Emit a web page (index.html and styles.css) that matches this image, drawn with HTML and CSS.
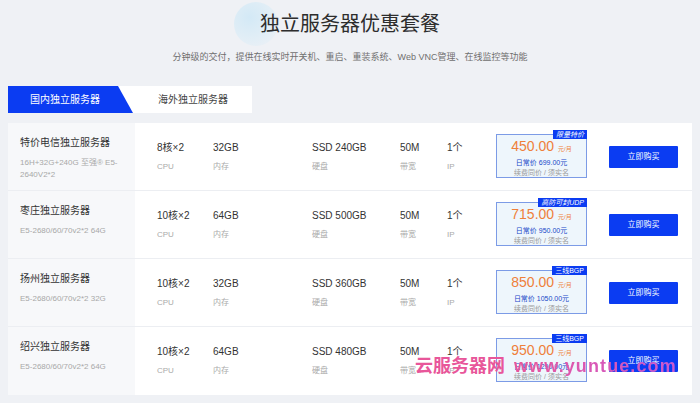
FILE: index.html
```html
<!DOCTYPE html>
<html lang="zh-CN">
<head>
  <meta charset="UTF-8">
  <meta name="viewport" content="width=device-width, initial-scale=1.0">
  <title>独立服务器优惠套餐</title>
  <link rel="stylesheet" href="styles.css">
</head>
<body>
  <div class="page">
    <!-- Heading -->
    <div class="hero">
      <span class="hero-dot"></span>
      <h1>独立服务器优惠套餐</h1>
      <p class="sub">分钟级的交付，提供在线实时开关机、重启、重装系统、Web VNC管理、在线监控等功能</p>
    </div>

    <!-- Tabs -->
    <div class="tabs">
      <div class="tab active">国内独立服务器</div>
      <div class="tab">海外独立服务器</div>
    </div>

    <!-- Server list -->
    <div class="list">
      <div class="row">
        <div class="name">
          <div class="title">特价电信独立服务器</div>
          <div class="desc">16H+32G+240G 至强® E5-<br>2640V2*2</div>
        </div>
        <div class="spec first"><div class="val">8核×2</div><div class="lbl">CPU</div></div>
        <div class="spec"><div class="val">32GB</div><div class="lbl">内存</div></div>
        <div class="spec"><div class="val">SSD 240GB</div><div class="lbl">硬盘</div></div>
        <div class="spec"><div class="val">50M</div><div class="lbl">带宽</div></div>
        <div class="spec"><div class="val">1个</div><div class="lbl">IP</div></div>
        <div class="price">
          <span class="badge">限量特价</span>
          <div class="amount">450.00 <small>元/月</small></div>
          <div class="normal">日常价 699.00元</div>
          <div class="note">续费同价 / 须实名</div>
        </div>
        <div class="buy"><a class="btn" href="#">立即购买</a></div>
      </div>

      <div class="row">
        <div class="name">
          <div class="title">枣庄独立服务器</div>
          <div class="desc">E5-2680/60/70v2*2 64G</div>
        </div>
        <div class="spec first"><div class="val">10核×2</div><div class="lbl">CPU</div></div>
        <div class="spec"><div class="val">64GB</div><div class="lbl">内存</div></div>
        <div class="spec"><div class="val">SSD 500GB</div><div class="lbl">硬盘</div></div>
        <div class="spec"><div class="val">50M</div><div class="lbl">带宽</div></div>
        <div class="spec"><div class="val">1个</div><div class="lbl">IP</div></div>
        <div class="price">
          <span class="badge">高防可封UDP</span>
          <div class="amount">715.00 <small>元/月</small></div>
          <div class="normal">日常价 950.00元</div>
          <div class="note">续费同价 / 须实名</div>
        </div>
        <div class="buy"><a class="btn" href="#">立即购买</a></div>
      </div>

      <div class="row">
        <div class="name">
          <div class="title">扬州独立服务器</div>
          <div class="desc">E5-2680/60/70v2*2 32G</div>
        </div>
        <div class="spec first"><div class="val">10核×2</div><div class="lbl">CPU</div></div>
        <div class="spec"><div class="val">32GB</div><div class="lbl">内存</div></div>
        <div class="spec"><div class="val">SSD 360GB</div><div class="lbl">硬盘</div></div>
        <div class="spec"><div class="val">50M</div><div class="lbl">带宽</div></div>
        <div class="spec"><div class="val">1个</div><div class="lbl">IP</div></div>
        <div class="price">
          <span class="badge plain">三线BGP</span>
          <div class="amount">850.00 <small>元/月</small></div>
          <div class="normal">日常价 1050.00元</div>
          <div class="note">续费同价 / 须实名</div>
        </div>
        <div class="buy"><a class="btn" href="#">立即购买</a></div>
      </div>

      <div class="row">
        <div class="name">
          <div class="title">绍兴独立服务器</div>
          <div class="desc">E5-2680/60/70v2*2 64G</div>
        </div>
        <div class="spec first"><div class="val">10核×2</div><div class="lbl">CPU</div></div>
        <div class="spec"><div class="val">64GB</div><div class="lbl">内存</div></div>
        <div class="spec"><div class="val">SSD 480GB</div><div class="lbl">硬盘</div></div>
        <div class="spec"><div class="val">50M</div><div class="lbl">带宽</div></div>
        <div class="spec"><div class="val">1个</div><div class="lbl">IP</div></div>
        <div class="price">
          <span class="badge plain">三线BGP</span>
          <div class="amount">950.00 <small>元/月</small></div>
          <div class="normal">日常价 1290.00元</div>
          <div class="note">续费同价 / 须实名</div>
        </div>
        <div class="buy"><a class="btn" href="#">立即购买</a></div>
      </div>
    </div>
  </div>

  <!-- Watermark -->
  <div class="watermark"><span class="wm-cn">云服务器网</span><span class="wm-url">www.yuntue.com</span></div>
</body>
</html>
```

FILE: styles.css
```css
body {
  margin: 0;
  background: #eff1f5;
  font-family: "Liberation Sans", "Noto Sans CJK SC", sans-serif;
  color: #333;
  position: relative;
  height: 403px;
  overflow: hidden;
}
.page {
  padding: 0 8px;
}

/* heading */
.hero {
  position: relative;
  text-align: center;
  padding-top: 10px;
}
.hero-dot {
  position: absolute;
  left: 226px;
  top: 2px;
  width: 44px;
  height: 44px;
  border-radius: 50%;
  background: radial-gradient(circle at 35% 35%, #d3e9f6 0%, #e2eef6 55%, rgba(232, 238, 245, 0) 100%);
}
.hero h1 {
  position: relative;
  margin: 0;
  font-size: 20px;
  line-height: 28px;
  font-weight: normal;
  color: #2d2d2d;
}
.hero .sub {
  position: relative;
  margin: 12px 0 0;
  font-size: 9px;
  line-height: 14px;
  color: #6f6f6f;
}

/* tabs */
.tabs {
  display: flex;
  width: 244px;
  height: 27px;
  margin-top: 22px;
  background: #fff;
}
.tab {
  font-size: 10px;
  line-height: 27px;
  color: #444;
}
.tab.active {
  width: 125px;
  padding-left: 22px;
  box-sizing: border-box;
  background: #0b3cf2;
  color: #fff;
  clip-path: polygon(0 0, 110px 0, 125px 100%, 0 100%);
}
.tab + .tab {
  padding-left: 25px;
}

/* list */
.list {
  width: 684px;
  margin-top: 10px;
  background: #fff;
}
.row {
  display: grid;
  grid-template-columns: 127px 78px 99px 88px 47px 49px 91px 91px 14px;
  height: 68px;
  box-sizing: border-box;
  border-bottom: 1px solid #eceef2;
}
.row:last-child {
  border-bottom: none;
}
.name {
  background: #f7f8fa;
  padding: 13px 12px 0;
}
.name .title {
  font-size: 10px;
  line-height: 14px;
  color: #333;
}
.name .desc {
  margin-top: 7px;
  font-size: 8px;
  line-height: 12px;
  color: #a8a8a8;
}
.spec {
  padding-top: 18px;
}
.spec.first {
  padding-left: 22px;
}
.spec .val {
  font-size: 10px;
  line-height: 14px;
  color: #333;
  white-space: nowrap;
}
.spec .lbl {
  margin-top: 6px;
  font-size: 8px;
  line-height: 12px;
  color: #aaa;
}

/* price box */
.price {
  position: relative;
  align-self: center;
  height: 44px;
  box-sizing: border-box;
  padding-top: 3px;
  margin-top: -2px;
  border: 1px solid #7c9be6;
  background: #eef6fc;
  text-align: center;
}
.badge {
  position: absolute;
  top: -5px;
  right: -1px;
  height: 9px;
  padding: 0 3px;
  background: #0b3cf2;
  color: #fff;
  font-size: 7px;
  line-height: 9px;
  font-style: italic;
}
.badge.plain {
  font-style: normal;
}
.amount {
  font-size: 14px;
  line-height: 17px;
  color: #ef7f3a;
}
.amount small {
  font-size: 6px;
}
.normal {
  font-size: 7px;
  line-height: 10px;
  color: #2047c8;
}
.note {
  font-size: 7px;
  line-height: 10px;
  color: #999;
}

/* button */
.buy {
  padding-left: 22px;
  align-self: center;
}
.btn {
  display: block;
  height: 22px;
  line-height: 22px;
  background: #0b3cf2;
  color: #fff;
  font-size: 8px;
  text-align: center;
  text-decoration: none;
  border-radius: 1px;
}

/* watermark */
.watermark {
  position: absolute;
  left: 415px;
  top: 356px;
  font-size: 18px;
  line-height: 20px;
  font-weight: bold;
  white-space: nowrap;
}
.wm-cn {
  color: #e8569a;
}
.wm-url {
  margin-left: 9px;
  letter-spacing: 1.1px;
  background: linear-gradient(90deg, #e8569a, #c95ad2);
  -webkit-background-clip: text;
  background-clip: text;
  color: transparent;
}
```
